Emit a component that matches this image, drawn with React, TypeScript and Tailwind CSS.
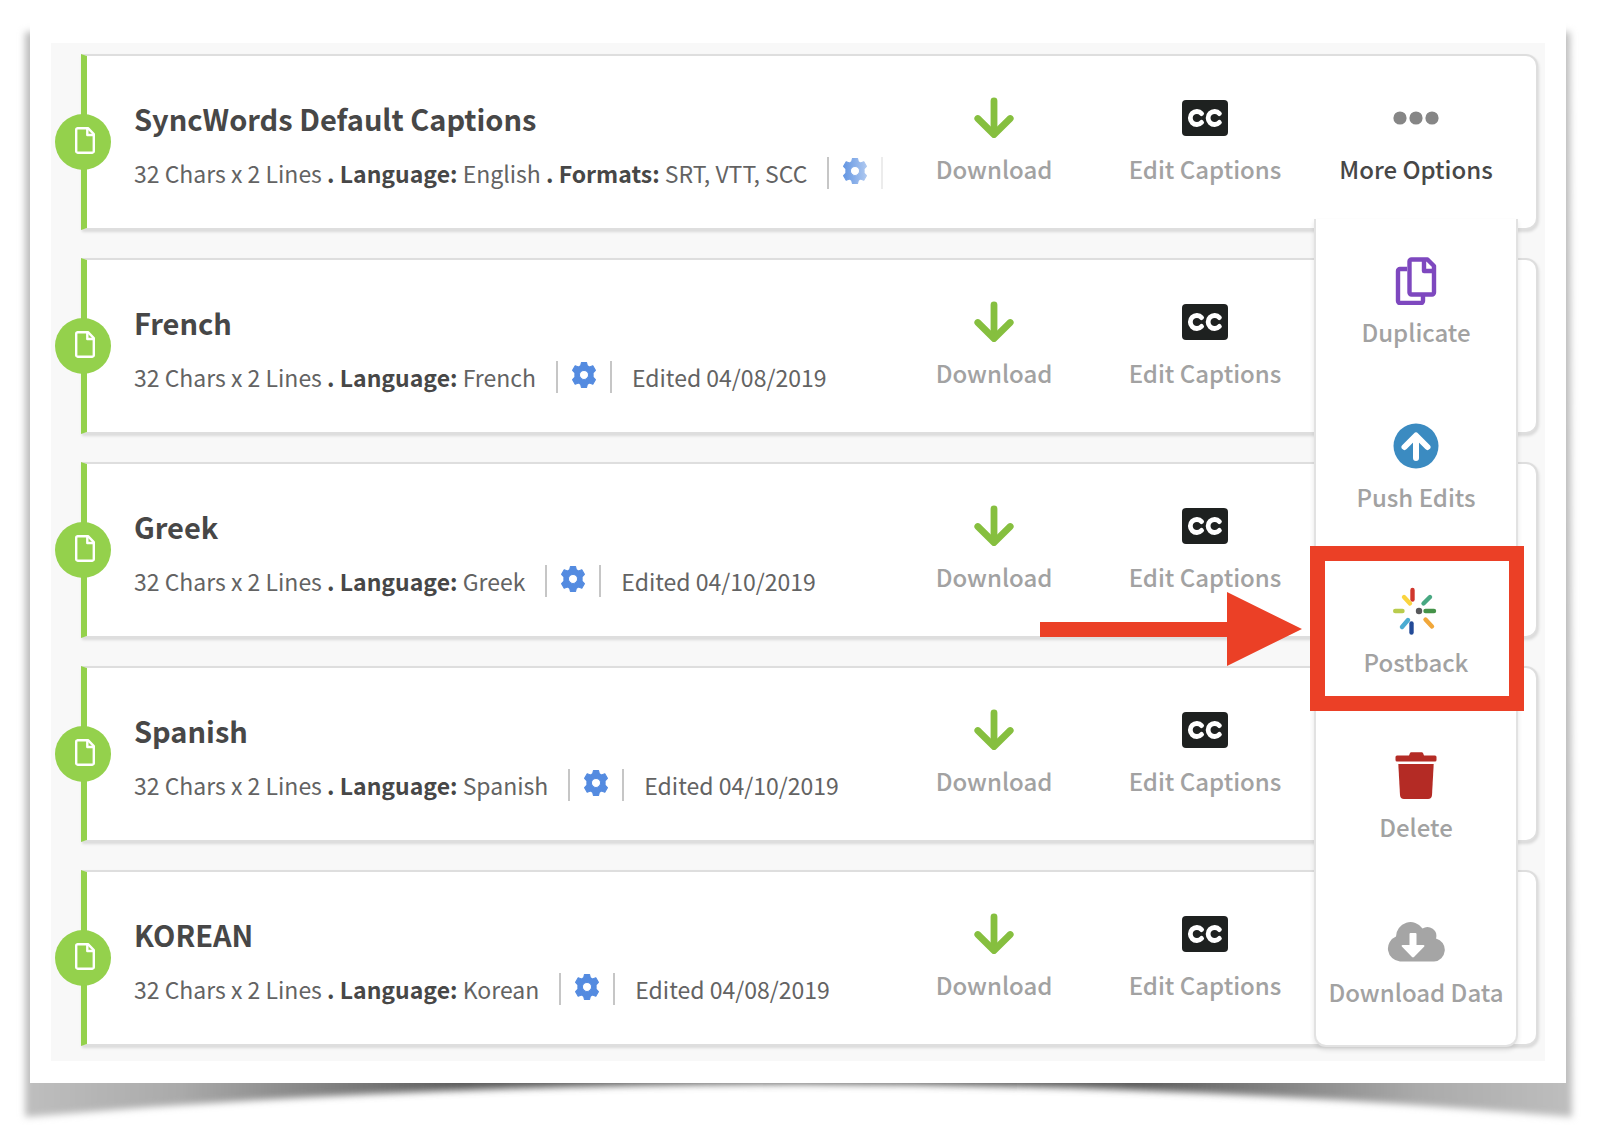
type Track = {
    name: string;
    language: string;
    formats?: string;
    edited?: string;
};

const tracks: Track[] = [
    { name: "SyncWords Default Captions", language: "English", formats: "SRT, VTT, SCC" },
    { name: "French", language: "French", edited: "Edited 04/08/2019" },
    { name: "Greek", language: "Greek", edited: "Edited 04/10/2019" },
    { name: "Spanish", language: "Spanish", edited: "Edited 04/10/2019" },
    { name: "KOREAN", language: "Korean", edited: "Edited 04/08/2019" },
];

function FileIcon() {
    return (
        <svg viewBox="0 0 20 27" className="w-5 h-[27px]" fill="none" stroke="#fff" strokeWidth="2.400" strokeLinejoin="round">
            <path d="M2.500 1.200H13l5.800 6v17a1.500 1.500 0 0 1-1.500 1.500H2.700a1.500 1.500 0 0 1-1.500-1.500V2.700A1.500 1.500 0 0 1 2.700 1.200Z" />
            <path d="M12.300 1.500V8H19" />
        </svg>
    );
}

function GearIcon({ faded }: { faded?: boolean }) {
    return (
        <svg viewBox="2 2 20 20" className="w-[26px] h-[26px]">
            <defs>
                <linearGradient id="gearFade">
                    <stop offset="0" stopColor="#6496e2" />
                    <stop offset="1" stopColor="#aec8f0" />
                </linearGradient>
            </defs>
            <path
                fill={faded ? "url(#gearFade)" : "#548be0"}
                stroke={faded ? "url(#gearFade)" : "#548be0"}
                strokeWidth=".8"
                strokeLinejoin="round"
                fillRule="evenodd"
                d="M10 2.400h4l.6 2.500 1.600.9 2.600-.9 2 3.500-1.800 1.900v3.400l1.800 1.900-2 3.500-2.600-.9-1.600.9-.6 2.500h-4l-.6-2.500-1.600-.9-2.600.9-2-3.500 1.800-1.900v-3.400l-1.800-1.900 2-3.500 2.600.9 1.600-.9ZM12 8.500a3.500 3.500 0 1 0 0 7 3.500 3.500 0 0 0 0-7Z"
            />
        </svg>
    );
}

function DownloadIcon() {
    return (
        <svg viewBox="0 0 40 42" className="w-10 h-[42px]" fill="none" stroke="#86bf3f" strokeWidth="6.800" strokeLinecap="round" strokeLinejoin="round">
            <path d="M20 3.800V36" />
            <path d="M3.800 21.500 20 37.500l16.200-16" />
        </svg>
    );
}

function CcIcon() {
    return (
        <svg viewBox="0 0 46 36" className="w-[46px] h-9">
            <rect width="46" height="36" rx="4" fill="#1e2120" />
            <g fill="none" stroke="#fff" strokeWidth="4.800" strokeLinecap="round">
                <path d="M19.600 13.600A6.500 6.500 0 1 0 19.600 22.400" />
                <path d="M37.400 13.600A6.500 6.500 0 1 0 37.400 22.400" />
            </g>
        </svg>
    );
}

function DotsIcon() {
    return (
        <svg viewBox="0 0 46 14" className="w-[46px] h-[14px]" fill="#868686">
            <circle cx="7" cy="7" r="6.600" />
            <circle cx="23" cy="7" r="6.600" />
            <circle cx="39" cy="7" r="6.600" />
        </svg>
    );
}

function DuplicateIcon() {
    return (
        <svg viewBox="0 0 42 48" className="w-[42px] h-12" fill="none" stroke="#7e48bf" strokeWidth="4.400" strokeLinejoin="round">
            <path d="M12 12H5A2 2 0 0 0 3 14v30a2 2 0 0 0 2 2H26a2 2 0 0 0 2-2v-6" />
            <path d="M16.500 2.500h16l6.500 6.500V35.500a2 2 0 0 1-2 2H16.500a2 2 0 0 1-2-2V4.500a2 2 0 0 1 2-2Z" />
            <path d="M29 3v11H39" />
        </svg>
    );
}

function PushIcon() {
    return (
        <svg viewBox="0 0 46 46" className="w-[46px] h-[46px]">
            <circle cx="23" cy="23" r="22.500" fill="#3b8bc1" />
            <path d="M23 35V14M11.500 24 23 12.500 34.500 24" fill="none" stroke="#fff" strokeWidth="6" strokeLinecap="round" strokeLinejoin="round" />
        </svg>
    );
}

function PostbackIcon() {
    return (
        <svg viewBox="2 0 46 48" className="w-[46px] h-12" strokeWidth="4.400" strokeLinecap="round">
            <path d="M21.500 3v9.500" stroke="#d0372d" />
            <path d="m39 10-6.500 6.500" stroke="#48a882" />
            <path d="M34.500 24H43" stroke="#459349" />
            <path d="m34.500 32.500 6.500 7" stroke="#f1a73a" />
            <path d="m17 33-6 7" stroke="#4bacd2" />
            <path d="M20.500 36.500v9" stroke="#234a97" />
            <path d="M4.200 24h7.300" stroke="#b9cc4d" />
            <path d="m13 10 6 6.500" stroke="#fad43f" />
            <circle cx="28" cy="24" r="3.200" fill="#58595b" />
        </svg>
    );
}

function TrashIcon() {
    return (
        <svg viewBox="0 0 42 48" className="w-[42px] h-12" fill="#b42b25">
            <path d="M14 3.500 15 1q.4-.7 1.200-.7h10.600q.8 0 1.200.7l1 2.500h11q1.500 0 1.500 1.500v3q0 1.500-1.500 1.500H2Q.5 9.500.5 8V5Q.5 3.500 2 3.500Z" />
            <path d="M3.300 12h35.400L37 43q-.3 4-4 4H9q-3.700 0-4-4Z" />
        </svg>
    );
}

function CloudIcon() {
    return (
        <svg viewBox="0 0 60 42" className="w-[60px] h-[42px]">
            <path d="M14 41.500A13 13 0 0 1 10 16.500 14.500 14.500 0 0 1 36.500 8.500 9 9 0 0 1 50 18.500 11.700 11.700 0 0 1 48 41.500Z" fill="#a5a5a5" />
            <path d="M24.500 13h5q1 0 1 1v11h7q1.500.2.800 1.600L28 37q-1 .8-2 0L15.800 26.600Q15 25.200 16.500 25H23.500V14q0-1 1-1Z" fill="#fff" />
        </svg>
    );
}

const menu = [
    { label: "Duplicate", Icon: DuplicateIcon },
    { label: "Push Edits", Icon: PushIcon },
    { label: "Postback", Icon: PostbackIcon, marked: true },
    { label: "Delete", Icon: TrashIcon },
    { label: "Download Data", Icon: CloudIcon },
];

function TrackCard({ track, first }: { track: Track; first: boolean }) {
    return (
        <li className="relative flex h-44 items-start rounded-r-xl border-2 border-l-[6px] border-[#dedede] border-l-[#94d14c] bg-white shadow-[1px_2px_3px_#0000001f]">
            <span className="absolute -left-8 top-[58px] flex size-14 items-center justify-center rounded-full bg-[#94d14c] pl-1 pb-1">
                <FileIcon />
            </span>
            <div className="min-w-0 flex-1 pl-[47px] pt-10">
                <h2 className="text-[29px] leading-[44px] font-bold text-[#474747]">{track.name}</h2>
                <div className="mt-[17px] flex items-center text-[23px] leading-8 whitespace-nowrap text-[#636363]">
                    <p>
                        32 Chars x 2 Lines <b className="text-[#474747]">. Language:</b> {track.language}
                        {track.formats && <> <b className="text-[#474747]">. Formats:</b> {track.formats}</>}
                    </p>
                    <button type="button" aria-label="Settings" className={"ml-5 flex h-8 w-14 items-center justify-center border-x-2 pb-1 " + (first ? "border-[#c6c6c6] border-r-[#ececec]" : "border-[#c6c6c6]")}>
                        <GearIcon faded={first} />
                    </button>
                    {track.edited && <span className="ml-5">{track.edited}</span>}
                </div>
            </div>
            <div className="flex shrink-0 pt-[39px] text-[24px] leading-8 font-medium whitespace-nowrap text-[#a2a2a2]">
                <button type="button" className="flex w-[212px] flex-col items-center gap-3">
                    <span className="flex h-[46px] items-center"><DownloadIcon /></span>
                    Download
                </button>
                <button type="button" className="flex w-[210px] flex-col items-center gap-3">
                    <span className="flex h-[46px] items-center"><CcIcon /></span>
                    Edit Captions
                </button>
                {first ? (
                    <button type="button" className="flex w-[212px] flex-col items-center gap-3 text-[#474747]">
                        <span className="flex h-[46px] items-center"><DotsIcon /></span>
                        More Options
                    </button>
                ) : (
                    <span className="w-[212px]" />
                )}
                <span className="w-[14px]" />
            </div>
        </li>
    );
}

export default function App() {
    return (
        <div className="min-h-screen bg-white pl-[30px] pr-8 pt-[21px] font-['Noto_Sans_CJK_SC','Noto_Sans',sans-serif]">
            <div className="relative">
                {/* curled paper shadow */}
                <svg viewBox="0 0 1598 1144" preserveAspectRatio="none" className="absolute -left-[30px] -top-[21px] w-[calc(100%+62px)] h-[calc(100%+82px)]">
                    <defs>
                        <linearGradient id="curl">
                            <stop offset="0" stopColor="#bebebe" />
                            <stop offset=".1" stopColor="#aaa" />
                            <stop offset=".28" stopColor="#5c5c5c" />
                            <stop offset=".5" stopColor="#666" />
                            <stop offset=".72" stopColor="#5c5c5c" />
                            <stop offset=".9" stopColor="#aaa" />
                            <stop offset="1" stopColor="#bebebe" />
                        </linearGradient>
                        <filter id="soft" x="-5%" y="-5%" width="110%" height="110%">
                            <feGaussianBlur stdDeviation="3.500" />
                        </filter>
                    </defs>
                    <path d="M25 32H1570L1572 1117Q799 1051 25 1117Z" fill="url(#curl)" filter="url(#soft)" />
                </svg>
                <main className="relative bg-white px-[21px] pt-[22px] pb-[22px]">
                    <div className="relative bg-[#f8f8f8] pt-[11px] pr-[7px] pb-[15px] pl-[30px]">
                        <ul className="flex flex-col gap-7">
                            {tracks.map((track, i) => (
                                <TrackCard key={track.name} track={track} first={i === 0} />
                            ))}
                        </ul>
                        <div className="absolute top-[176px] right-[27px] h-[828px] w-[204px] rounded-b-xl border-2 border-t-0 border-[#e2e2e2] bg-white pt-[37px] shadow-[0_3px_5px_#0000001a]">
                            {menu.map(({ label, Icon, marked }) => (
                                <div key={label} className="relative h-[165px]">
                                    {marked && <span className="absolute -left-[6px] -right-2 -top-[40px] h-[165px] border-[15px] border-[#eb4026]" />}
                                    <button type="button" className="relative flex w-full flex-col items-center gap-[10px] text-[24px] leading-8 font-medium whitespace-nowrap text-[#a2a2a2]">
                                        <span className="flex h-[50px] items-center"><Icon /></span>
                                        {label}
                                    </button>
                                    {marked && (
                                        <svg viewBox="0 0 262 74" className="absolute top-[6px] right-[214px] w-[262px] h-[74px]">
                                            <path d="M0 30h187V0l75 37-75 37V45H0Z" fill="#eb4026" />
                                        </svg>
                                    )}
                                </div>
                            ))}
                        </div>
                    </div>
                </main>
            </div>
        </div>
    );
}
